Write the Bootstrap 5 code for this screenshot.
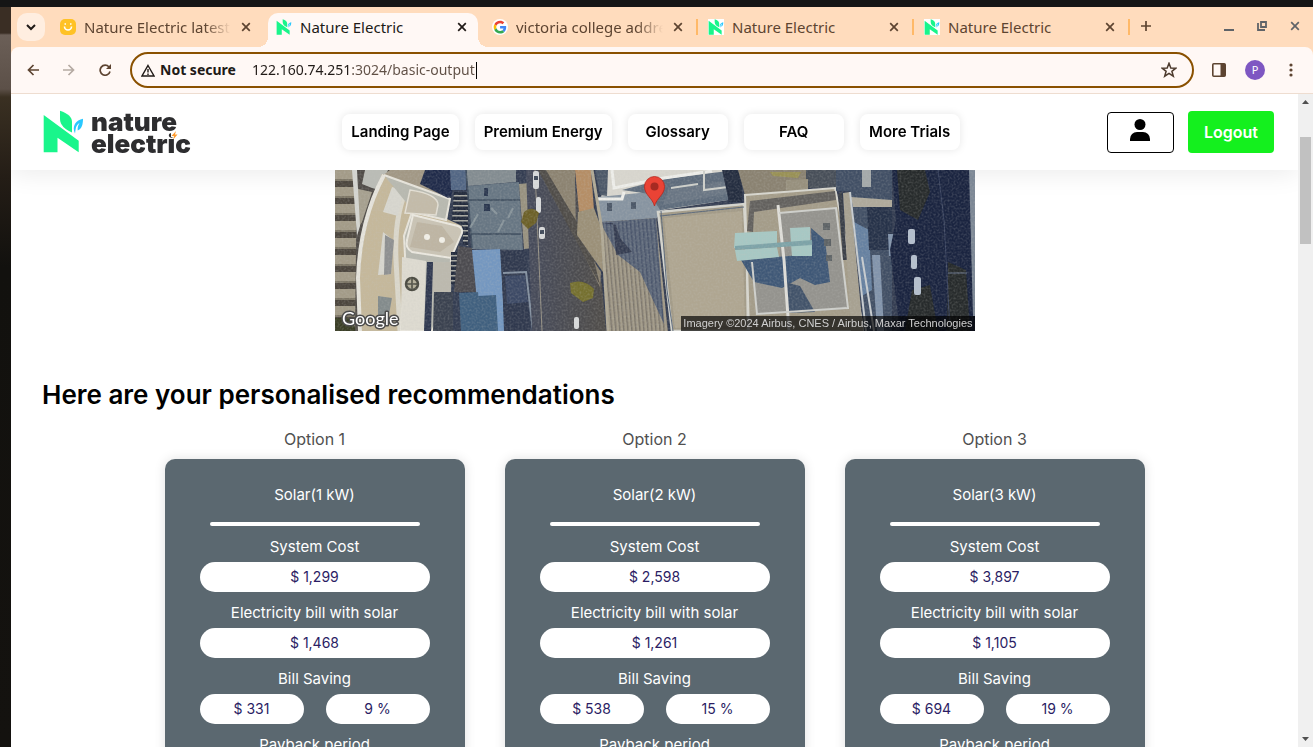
<!DOCTYPE html>
<html lang="en">
<head>
<meta charset="utf-8">
<meta name="viewport" content="width=device-width, initial-scale=1">
<title>Nature Electric</title>
<link href="https://cdn.jsdelivr.net/npm/bootstrap@5.3.0/dist/css/bootstrap.min.css" rel="stylesheet">
<style>
:root{--peach:#ffdcbd;--cream:#fff8f5;--brown:#5d4431;--ring:#8a5100;--slate:#5b6870;--ink:#2b1d64}
body{font-family:Inter,"Noto Sans",sans-serif;color:#000;background:#151515}
svg{display:block}
.os-panel{height:7px;background:#151515}
.wallpaper{width:11px;background:linear-gradient(#3a2e24 0,#3a2e24 26px,#6b5f57 28px,#5c5048 82px,#3a3022 90px,#241d16 170px,#12110e 260px,#14120f 100%)}
.ui-font{font-family:"Noto Sans",sans-serif;font-size:14px;line-height:20px}
.plain-btn{border:0;background:none;padding:0;color:inherit;display:flex;align-items:center;justify-content:center}
/* tab strip */
.tabstrip{height:40px;background:var(--peach);color:var(--brown);padding:6px 13px 0 6px}
.tab-search{width:28px;height:28px;border-radius:10px;background:#ffeee0;margin-right:7px;color:#201a17}
.tab-item{flex:0 1 216px;min-width:0;height:34px;padding:0 17px 6px 8px;position:relative;font-size:15px}
.tab-item .title{flex:1 1 0;min-width:0;margin:0 10px 0 8px;white-space:nowrap;overflow:hidden}
.tab-item .title.fade-end{-webkit-mask-image:linear-gradient(90deg,#000 82%,transparent);mask-image:linear-gradient(90deg,#000 82%,transparent)}
.tab-item.current{color:#201a17}
.tab-item.current::before{content:"";position:absolute;inset:0 6px 0 0;background:var(--cream);border-radius:10px 10px 0 0}
.tab-item.current>*{position:relative}
.tab-item .foot{position:absolute;bottom:0;width:10px;height:10px}
.foot-l{left:-10px;background:radial-gradient(circle at 0 0,transparent 10px,var(--cream) 10px)}
.foot-r{right:-4px;background:radial-gradient(circle at 100% 0,transparent 10px,var(--cream) 10px)}
.tab-item.ruled::after{content:"";position:absolute;right:2px;top:6px;width:2px;height:16px;background:#ffb968}
.window-btns{gap:23px;color:#5f6368}
/* toolbar */
.toolbar{height:47px;background:var(--cream);border-bottom:1px solid #eeddd0;border-radius:8px 8px 0 0;padding:0 12px;color:var(--brown)}
.omnibox{height:36px;border:2px solid var(--ring);border-radius:18px;padding:0 15px 0 9px;color:#201a17}
.url-input{width:224px;border:0;outline:0;padding:0;color:transparent;background:linear-gradient(90deg,#201a17 99px,#5f4f45 99px);-webkit-background-clip:text;background-clip:text}
.text-caret{width:1px;height:17px;background:#000}
.avatar{width:20px;height:20px;border-radius:50%;background:#7e57c2;color:#fff;font-size:11px}
/* page */
.site-head{height:76px;padding:0 24px 0 32px;box-shadow:0 4px 24px rgba(0,0,0,.08);z-index:2}
.menu-btn{min-width:100px;height:36px;padding:0 9px;border-radius:8px;background:#fff;color:#000;font-size:15px;font-weight:600;line-height:20px;box-shadow:0 0 8px rgba(0,0,0,.1);display:flex;align-items:center;justify-content:center;text-decoration:none;white-space:nowrap}
.profile-btn{width:67px;height:41px;border:1px solid #000;border-radius:4px;background:#fff;padding:0 0 4px}
.logout-btn{width:86px;height:42px;border:0;border-radius:4px;background:#14f01e;color:#fff;font-size:16px;font-weight:600}
.aerial{width:640px;max-width:100%}
.credit{right:0;bottom:0;padding:0 2px;background:rgba(0,0,0,.68);color:#cfcfcf;font:11px/15px "Liberation Sans",sans-serif;white-space:nowrap}
.headline{font-size:26px;line-height:32px;font-weight:600;margin:48px 31px 16px}
.options{gap:40px}
.option{width:300px}
.option-name{font-size:16px;line-height:24px;color:#505050;margin-bottom:8px}
.plan{background:var(--slate);border-radius:10px;padding:24px 35px;color:#fff;font-size:15px;line-height:20px;box-shadow:0 0 12px rgba(0,0,0,.12)}
.plan-name{font-size:15px;line-height:24px;font-weight:400;margin:0 0 15px}
.rule{height:4px;border-radius:2px;background:#fff;margin:0 10px}
.plan dt{font-weight:400;padding:11px 0 5px}
.plan dd{margin:0}
.pill{height:30px;line-height:30px;font-size:14px;border-radius:15px;background:#fff;color:var(--ink);flex:1 1 0}
.scroller{width:15px;background:#f0f0f0;padding:5px 2px}
.thumb{height:107px;background:#c1c1c1;margin-top:33px}
</style>
</head>
<body>
<svg width="0" height="0" class="position-absolute" aria-hidden="true">
 <symbol id="leafN" viewBox="0 0 41 43">
  <path fill="#19f58b" d="M.7 5 35.7 30.700V42.300L14.500 27.700V42.300H.7Z"/>
  <path fill="#19f58b" d="M17 .7C25 3.500 29 7 29 12V22.500C22 19.500 17 15 17 9Z"/>
  <path fill="#29c8ff" d="M40 8.700C33 10 28.500 16 32 23.500L32.500 20C33 16 34.500 14 36.500 13 34.800 15.500 34.500 18 34.700 20.500 39 19 40 14 40 8.700Z"/>
 </symbol>
 <symbol id="cross" viewBox="0 0 10 10"><path d="M1.200 1.200 8.800 8.800M8.800 1.200 1.200 8.800" stroke="currentColor" stroke-width="1.700" fill="none"/></symbol>
</svg>

<div class="vh-100 d-flex flex-column overflow-hidden">
 <div class="os-panel flex-shrink-0"></div>
 <div class="d-flex flex-grow-1" style="min-height:0">
  <div class="wallpaper flex-shrink-0"></div>
  <div class="flex-grow-1 d-flex flex-column bg-white" style="min-width:0">

   <div class="tabstrip ui-font d-flex flex-shrink-0">
    <button class="plain-btn tab-search flex-shrink-0" aria-label="Search tabs"><svg width="10" height="7" viewBox="0 0 10 7"><path d="M1 1 5 5 9 1" fill="none" stroke="currentColor" stroke-width="2"/></svg></button>
    <div class="tab-item d-flex align-items-center">
     <svg width="16" height="16"><rect width="16" height="16" rx="5" fill="#ffc225"/><path d="M4.500 7.500a3.500 3.500 0 0 0 7 0" fill="none" stroke="#fff" stroke-width="1.600"/><path d="M4.500 5h1.500M10 5h1.500" stroke="#fff" stroke-width="1.500"/></svg>
     <span class="title fade-end">Nature Electric latest</span>
     <button class="plain-btn" aria-label="Close tab"><svg width="10" height="10"><use href="#cross"/></svg></button>
    </div>
    <div class="tab-item current d-flex align-items-center">
     <svg width="16" height="16"><use href="#leafN"/></svg>
     <span class="title">Nature Electric</span>
     <button class="plain-btn" aria-label="Close tab"><svg width="10" height="10"><use href="#cross"/></svg></button>
     <i class="foot foot-l position-absolute"></i><i class="foot foot-r position-absolute"></i>
    </div>
    <div class="tab-item ruled d-flex align-items-center">
     <svg width="16" height="16" viewBox="0 0 48 48"><circle cx="24" cy="24" r="24" fill="#fff"/><g transform="translate(5 5) scale(.8)"><path fill="#EA4335" d="M24 9.500c3.540 0 6.710 1.220 9.210 3.600l6.850-6.850C35.900 2.380 30.470 0 24 0 14.620 0 6.510 5.380 2.560 13.220l7.980 6.190C12.430 13.720 17.740 9.500 24 9.500z"/><path fill="#4285F4" d="M46.980 24.550c0-1.570-.15-3.090-.38-4.550H24v9.020h12.940c-.58 2.960-2.260 5.480-4.780 7.180l7.730 6c4.510-4.180 7.090-10.360 7.090-17.650z"/><path fill="#FBBC05" d="M10.530 28.590c-.48-1.450-.76-2.990-.76-4.590s.27-3.140.76-4.590l-7.980-6.190C.92 16.460 0 20.120 0 24c0 3.880.92 7.540 2.560 10.780l7.970-6.190z"/><path fill="#34A853" d="M24 48c6.480 0 11.930-2.130 15.890-5.810l-7.730-6c-2.150 1.450-4.920 2.300-8.160 2.300-6.260 0-11.570-4.220-13.470-9.910l-7.980 6.190C6.510 42.620 14.620 48 24 48z"/></g></svg>
     <span class="title fade-end">victoria college addre</span>
     <button class="plain-btn" aria-label="Close tab"><svg width="10" height="10"><use href="#cross"/></svg></button>
    </div>
    <div class="tab-item ruled d-flex align-items-center">
     <svg width="16" height="16" class="bg-white"><use href="#leafN"/></svg>
     <span class="title">Nature Electric</span>
     <button class="plain-btn" aria-label="Close tab"><svg width="10" height="10"><use href="#cross"/></svg></button>
    </div>
    <div class="tab-item ruled d-flex align-items-center">
     <svg width="16" height="16" class="bg-white"><use href="#leafN"/></svg>
     <span class="title">Nature Electric</span>
     <button class="plain-btn" aria-label="Close tab"><svg width="10" height="10"><use href="#cross"/></svg></button>
    </div>
    <button class="plain-btn ms-2 pb-1 mb-1" aria-label="New tab"><svg width="12" height="12"><path d="M6 1V11M1 6H11" stroke="currentColor" stroke-width="1.700"/></svg></button>
    <div class="window-btns d-flex ms-auto align-items-center pb-2">
     <button class="plain-btn" aria-label="Minimize"><svg width="10" height="10"><path d="M0 9H10" stroke="currentColor" stroke-width="2"/></svg></button>
     <button class="plain-btn" aria-label="Restore"><svg width="10" height="10"><path d="M4 1H9V6H4ZM1 2V9H8" fill="none" stroke="currentColor" stroke-width="1.800"/></svg></button>
     <button class="plain-btn" aria-label="Close window"><svg width="10" height="10"><use href="#cross"/></svg></button>
    </div>
   </div>

   <div style="background:var(--peach)" class="flex-shrink-0">
   <div class="toolbar ui-font d-flex align-items-center">
    <button class="plain-btn me-4 ms-1" aria-label="Back"><svg width="12" height="12"><path d="M12 6H1.500M6.500 1 1.500 6l5 5" fill="none" stroke="currentColor" stroke-width="1.700"/></svg></button>
    <button class="plain-btn me-4" aria-label="Forward" style="color:#b5aaa2"><svg width="12" height="12"><path d="M0 6H10.500M5.500 1 10.500 6l-5 5" fill="none" stroke="currentColor" stroke-width="1.700"/></svg></button>
    <button class="plain-btn" aria-label="Reload" style="margin-right:19px"><svg width="12" height="12"><path d="M10 3A5 5 0 1 0 11 7.500" fill="none" stroke="currentColor" stroke-width="1.700"/><path d="M12 0V5H7Z" fill="currentColor"/></svg></button>
    <div class="omnibox d-flex align-items-center flex-grow-1">
     <svg width="14" height="13"><path d="M7 1.500 13 12H1Z" fill="none" stroke="currentColor" stroke-width="1.400"/><path d="M7 5V8.500M7 9.500V11" stroke="currentColor" stroke-width="1.400"/></svg>
     <label for="url" class="fw-bold text-nowrap" style="margin:0 16px 0 5px">Not secure</label>
     <input id="url" class="url-input ui-font" value="122.160.74.251:3024/basic-output">
     <span class="text-caret"></span>
     <button class="plain-btn ms-auto" aria-label="Bookmark"><svg width="16" height="16"><path d="M8 1.300 9.800 6 14.800 6.200 10.900 9.300 12.300 14.200 8 11.400 3.700 14.200 5.100 9.300 1.200 6.200 6.200 6Z" fill="none" stroke="#4d3b2e" stroke-width="1.500"/></svg></button>
    </div>
    <button class="plain-btn" aria-label="Side panel" style="margin:0 19px 0 18px"><svg width="14" height="14"><rect x=".8" y=".8" width="12.400" height="12.400" rx="1" fill="none" stroke="currentColor" stroke-width="1.600"/><path d="M8.500 1H13V13H8.500Z" fill="currentColor"/></svg></button>
    <button class="plain-btn avatar" aria-label="Profile">P</button>
    <button class="plain-btn" aria-label="Menu" style="margin:0 8px 0 24px"><svg width="4" height="14" fill="currentColor"><circle cx="2" cy="2" r="1.600"/><circle cx="2" cy="7" r="1.600"/><circle cx="2" cy="12" r="1.600"/></svg></button>
   </div>
   </div>

   <div class="d-flex flex-grow-1" style="min-height:0">
    <div class="flex-grow-1 overflow-hidden" style="min-width:0">
     <header class="site-head sticky-top bg-white d-flex align-items-center justify-content-between">
      <a href="#" aria-label="nature electric">
       <svg width="152" height="44" viewBox="43 110 152 44" class="overflow-visible">
        <use href="#leafN" x="43" y="110" width="41" height="43"/>
        <g font-family="Inter,sans-serif" font-weight="900" font-size="26" fill="#2d2d2f"><text x="91" y="131">nature</text><text x="91" y="153">electric</text></g>
        <path d="M171 131h9v6h-9Z" fill="#fff"/><path d="M176 131 171.500 136H174L173.200 139.500 177.500 134.500H175Z" fill="#ff9a2b"/>
       </svg>
      </a>
      <nav class="d-flex gap-3">
       <a class="menu-btn" href="#">Landing Page</a><a class="menu-btn" href="#">Premium Energy</a><a class="menu-btn" href="#">Glossary</a><a class="menu-btn" href="#">FAQ</a><a class="menu-btn" href="#">More Trials</a>
      </nav>
      <div class="d-flex align-items-center" style="gap:14px">
       <button class="plain-btn profile-btn" aria-label="Account"><svg width="20" height="22"><circle cx="10" cy="5.500" r="5.500"/><path d="M0 22v-2a7 7 0 0 1 7-7h6a7 7 0 0 1 7 7v2Z"/></svg></button>
       <button class="logout-btn">Logout</button>
      </div>
     </header>

     <div class="aerial position-relative mx-auto" style="z-index:3">
      <svg class="w-100" viewBox="335 170 640 161" role="img" aria-label="Satellite view of the property">
       <defs>
        <pattern id="sheds" width="40" height="17" patternUnits="userSpaceOnUse"><rect width="40" height="17" fill="#4c463e"/><rect width="40" height="9" fill="#a39b88"/><rect y="9" width="40" height="2" fill="#7d7666"/></pattern>
        <pattern id="ribs" width="4" height="8" patternUnits="userSpaceOnUse" patternTransform="rotate(-5)"><rect width="4" height="8" fill="#a39b89"/><rect width="1.500" height="8" fill="#7b756b"/></pattern>
        <pattern id="ribsDark" width="4" height="8" patternUnits="userSpaceOnUse" patternTransform="rotate(-5)"><rect width="4" height="8" fill="#606b7c"/><rect width="1.500" height="8" fill="#48536a"/></pattern>
        <pattern id="rungs" width="12" height="5" patternUnits="userSpaceOnUse"><rect width="12" height="5" fill="#222a3c"/><rect width="12" height="1.500" fill="#a9a9a2"/></pattern>
        <linearGradient id="road" x1="0" x2="1"><stop stop-color="#464b5c"/><stop offset="1" stop-color="#504d49"/></linearGradient>
        <filter id="grain" x="0" y="0" width="100%" height="100%"><feTurbulence type="fractalNoise" baseFrequency=".5" numOctaves="2" seed="8"/><feColorMatrix values="0 0 0 0 .55  0 0 0 0 .55  0 0 0 0 .52  1.600 0 0 0 -.62"/></filter>
       </defs>
       <path fill="#343d52" d="M335 170H975V331H335Z"/>
       <path fill="url(#sheds)" d="M335 170H357V331H335Z"/>
       <path fill="#3a3e26" d="M335 318h16l6 13h-22Z"/>
       <path fill="#504c48" d="M357 170H390L362 300 365 331H355Z"/>
       <path fill="#babcb6" d="M365 170H388L380 190 372 188 362 184Z"/>
       <path fill="#a6a08f" d="M354 188 372 192 362 222 357 230Z"/>
       <path fill="#d5d6d1" d="M352 170h5l3 56-3 10-3-40Z"/>
       <path fill="#a29885" d="M390 170H425L448 197 382 176Z"/>
       <path fill="#c5b89b" d="M382 174 450 199 447 219 462 226 452 258 450 290 434 300 432 331H362Q350 260 382 174Z"/>
       <path fill="none" stroke="#e6e4dc" stroke-width="4" d="M384 175Q360 220 358 278L360 331"/>
       <path fill="none" stroke="#dbd8cc" stroke-width="5" d="M408 186Q394 215 396 260L400 331"/>
       <path fill="#d8d7cf" d="M392 187 404 190 398 216 383 212ZM383 232 393 240 391 274 378 275Z"/>
       <path fill="#8e9091" d="M385 235 394 240 391 274 384 275Z"/>
       <path fill="#b8b9b0" stroke="#e8e5dc" stroke-width="2" d="M384 175 450 199 446 220 412 212 404 236 405 256 401 331H432L450 292 451 258"/>
       <path fill="#c3bba9" stroke="#e4e0d5" stroke-width="1.500" d="M410 190Q438 194 438 205L436 215 405 213Z"/>
       <path fill="#cac4b5" stroke="#ece9e0" stroke-width="2" d="M413 215 458 226Q463 228 462 233L451 258 412 252Q405 248 407 240Z"/>
       <path fill="#b5ac98" d="M417 222 442 226 454 242 440 252 410 247Z" opacity=".6"/>
       <g fill="#f2f0e8"><circle cx="427" cy="237" r="3"/><circle cx="442" cy="240" r="3"/></g>
       <path fill="#dedbd1" d="M402 257 426 261 424 330H401Z"/>
       <path fill="#bcb9ae" d="M432 262H451V292H432Z"/>
       <circle cx="412" cy="284" r="6" fill="#b5b09b" stroke="#4b4b42" stroke-width="2.500"/><path d="M407 284h10M412 279v10" stroke="#4b4b42" stroke-width="1.500"/>
       <path fill="#2f3850" d="M427 262H433L431 331H424Z"/><path fill="#3b4250" d="M434 292H453V331H433Z"/>
       <path fill="#4d667f" d="M378 296 392 298 388 320 378 316Z" opacity=".55"/>
       <path fill="#202b4a" d="M425 170H452V195L448 198 420 184Z"/>
       <path fill="#526684" d="M450 170H466V190H451Z"/>
       <path fill="url(#rungs)" d="M454 192H468V246L463 244V226L452 220Z"/><path fill="url(#rungs)" d="M451 252H457V284H451Z"/>
       <path fill="#4c4b50" d="M458 246 472 248 476 292H454Z"/>
       <path fill="#838c91" d="M466 170H516V182L468 186Z"/>
       <path fill="#677683" d="M468 186 519 182 523 250 472 249Z"/>
       <path fill="none" stroke="#3f4e5f" stroke-width="1.500" d="M468 200H520M470 234H521M466 170 472 248"/>
       <path fill="none" stroke="#96a1a5" stroke-width="2" opacity=".7" d="M478 214 470 228M491 208 497 214M504 220 498 232M513 208 508 218"/>
       <path fill="#2a374f" d="M484 188h4v8h-4ZM484 204h6v7h-6Z"/>
       <path fill="#989280" d="M519 184 529 183 534 248 524 249Z"/>
       <path fill="#7497c0" d="M472 250 500 249 505 331H480Z"/>
       <path fill="#40607f" d="M459 293 478 292 482 331H461ZM478 296 496 295 498 331H482Z"/>
       <path fill="#30394e" d="M501 251 525 250 530 331H504Z"/><path fill="none" stroke="#8390a0" stroke-width="2" d="M503 273 526 272 533 331"/>
       <path fill="#3c4965" d="M505 276 525 275 528 302 507 304Z"/>
       <path fill="url(#road)" d="M526 170H570L602 285 606 331H532Z"/>
       <path fill="#8c8371" d="M542 170H575L576 235 601 272 600 287Z"/><path fill="#504d49" d="M538 170H546L590 244 600 285Z"/>
       <path fill="#b58e66" d="M575 170H591L594 210 579 212Z"/><path fill="#9b9078" d="M578 212 594 208 602 230 603 272 577 235Z"/>
       <path stroke="#969185" d="M535 170 542 331" fill="none"/>
       <g fill="#d8dadb"><rect x="533" y="171" width="6" height="18" rx="2"/><rect x="536" y="197" width="5" height="16" rx="2"/><rect x="539" y="227" width="6" height="12" rx="2"/><rect x="574" y="317" width="5" height="12" rx="2"/></g>
       <path fill="#404a5a" d="M534 176h4v4h-4ZM540 230h4v4h-4Z"/>
       <path fill="#6c6028" d="M524 212q8-7 15 1l-3 10-8 6-7-7Z"/><path fill="#75702f" d="M570 283q14-5 24 6l-1 9-10 4-12-9Z"/>
       <path fill="#d9d7cf" d="M607 170H725L728 200 650 212 600 202Z"/>
       <path fill="#8794a1" d="M598 197 650 192 665 208 655 220 600 222Z"/><path fill="#4c5868" d="M607 203h5v8h-5ZM631 202h5v7h-5ZM608 170 595 170 600 195 607 196Z"/>
       <path fill="#5e6c7c" d="M622 190 664 179 728 171V200L660 210 650 194Z"/>
       <path fill="none" stroke="#eeeeea" stroke-width="3" d="M598 199H622L624 192M612 170 614 188 664 178 712 171"/>
       <path fill="#6a7684" d="M668 190 728 181V194L663 205Z"/><path fill="none" stroke="#ced0cb" stroke-width="2" d="M671 188 698 184M704 171V190L728 187"/>
       <path fill="url(#ribs)" d="M602 222 656 218 668 331H609Z"/>
       <path fill="url(#ribsDark)" d="M602 222 656 218 664 324 640 272 618 255 602 226Z"/><path fill="#2c3348" d="M602 223H613L616 255 632 252 620 238 616 225Z" opacity=".75"/>
       <path fill="none" stroke="#b0a995" stroke-width="3" d="M592 170 602 230 608 331"/>
       <path fill="#a39b88" stroke="#d5d5ce" stroke-width="2.500" d="M658 212 744 204 747 260 748 331H672Z"/>
       <path fill="#afa691" d="M664 218 742 211 745 325 675 328Z"/>
       <path fill="none" stroke="#596779" stroke-width="1" d="M661 211 667 290 673 331M660 216 744 207"/>
       <path fill="#242d40" d="M722 170H742V202L729 202Z"/><path fill="#8a8271" d="M738 170H806V192L745 195Z"/><path fill="#a49b42" d="M770 172H801L798 178 773 176Z" opacity=".6"/>
       <path fill="#484f59" d="M806 170H836V188H806Z"/><path fill="#97907d" d="M786 180 808 179V190H786Z"/>
       <path fill="#a49c89" stroke="#d8d7cf" stroke-width="2" d="M745 195 835 188 864 331H749Z"/>
       <path fill="#63615e" d="M750 201 835 191 836 200 754 212 753 232 747 231Z"/>
       <path fill="#94938e" d="M779 213 837 208 848 309 757 314 752 262 780 256Z"/>
       <path fill="#3f5877" d="M741 260 812 254 811 228 825 240 830 282 815 285 800 278 782 288 754 282Z"/><path fill="#42536a" d="M785 282 800 286 815 312 787 313Z"/>
       <path fill="none" stroke="#e0dfda" stroke-width="3" d="M778 205 784 260 789 331"/><path fill="none" stroke="#cfd0cc" stroke-width="2" d="M779 213 836 208 848 308 757 314 752 262"/>
       <path fill="#3a3f48" d="M838 194 842 192 847 260 843 260Z"/><path fill="#a7a191" d="M843 193 850 192 863 331H851Z"/>
       <path fill="#a7c8c4" d="M735 233 777 231V246L734 248ZM790 228 810 227V242L791 243ZM735 250 777 247 779 257 737 261ZM791 245 812 243V256L792 256Z"/>
       <path fill="#7da3a8" d="M735 246 812 240V245L735 250Z"/>
       <g fill="#5e6366"><rect x="823" y="223" width="7" height="7"/><rect x="824" y="239" width="7" height="7"/><rect x="826" y="255" width="6" height="6"/></g>
       <path fill="#414f65" d="M836 170H892V331H864L850 191H836Z"/><path fill="#a4a9aa" d="M862 170H871V187H862Z"/><path fill="#aea99b" d="M851 197 892 200V207H853Z"/>
       <path fill="#6681a1" d="M854 222 869 230 872 290 862 296Z"/><path fill="#263249" d="M867 207H892V250H869Z"/><path fill="#8294ac" d="M872 255H880L884 331H877ZM888 234H896L897 256H889Z"/>
       <path fill="none" stroke="#c7ccd0" stroke-width="2" d="M850 192 866 331M862 257 874 331"/>
       <path fill="#1a2440" d="M892 170H975V331H900L890 250 896 220Z"/>
       <path fill="#272b2c" d="M897 170H925L930 192 918 220 900 210ZM912 290 930 285 938 331H905ZM948 262 966 270 970 331H947Z"/>
       <path fill="none" stroke="#3a4460" d="M938 170 944 220 950 331"/><path stroke="#69758b" d="M948 273H967"/>
       <g fill="#b4bfcd"><rect x="908" y="229" width="7" height="15" rx="2"/><rect x="911" y="255" width="6" height="14" rx="2"/><rect x="914" y="277" width="7" height="18" rx="2"/></g>
       <path fill="#7c8795" d="M969 170H975V316H973Z"/>
       <path d="M335 170H975V331H335Z" filter="url(#grain)" opacity=".3"/>
       <path d="M654.500 206C652.500 198 644.500 195 644.500 186.500a10 10 0 0 1 20 0C664.500 195 656.500 198 654.500 206Z" fill="#ea4335" stroke="#b6261c" stroke-width=".8"/><circle cx="654.500" cy="186.500" r="4" fill="#a52a22"/>
       <text x="342" y="325" font-family="Lato,sans-serif" font-size="18" font-weight="400" fill="#fff" stroke="#4c4c4c" stroke-width="3" stroke-linejoin="round" paint-order="stroke">Google</text>
      </svg>
      <div class="credit position-absolute">Imagery ©2024 Airbus, CNES / Airbus, Maxar Technologies</div>
     </div>

     <h1 class="headline">Here are your personalised recommendations</h1>

     <div class="options d-flex flex-wrap justify-content-center text-center">
      <section class="option">
       <div class="option-name">Option 1</div>
       <div class="plan">
        <h2 class="plan-name">Solar(1 kW)</h2><div class="rule"></div>
        <dl class="m-0">
         <dt>System Cost</dt><dd class="pill">$ 1,299</dd>
         <dt>Electricity bill with solar</dt><dd class="pill">$ 1,468</dd>
         <dt>Bill Saving</dt><dd class="d-flex" style="gap:22px"><span class="pill">$ 331</span><span class="pill">9 %</span></dd>
         <dt>Payback period</dt><dd class="pill"></dd>
        </dl>
       </div>
      </section>
      <section class="option">
       <div class="option-name">Option 2</div>
       <div class="plan">
        <h2 class="plan-name">Solar(2 kW)</h2><div class="rule"></div>
        <dl class="m-0">
         <dt>System Cost</dt><dd class="pill">$ 2,598</dd>
         <dt>Electricity bill with solar</dt><dd class="pill">$ 1,261</dd>
         <dt>Bill Saving</dt><dd class="d-flex" style="gap:22px"><span class="pill">$ 538</span><span class="pill">15 %</span></dd>
         <dt>Payback period</dt><dd class="pill"></dd>
        </dl>
       </div>
      </section>
      <section class="option">
       <div class="option-name">Option 3</div>
       <div class="plan">
        <h2 class="plan-name">Solar(3 kW)</h2><div class="rule"></div>
        <dl class="m-0">
         <dt>System Cost</dt><dd class="pill">$ 3,897</dd>
         <dt>Electricity bill with solar</dt><dd class="pill">$ 1,105</dd>
         <dt>Bill Saving</dt><dd class="d-flex" style="gap:22px"><span class="pill">$ 694</span><span class="pill">19 %</span></dd>
         <dt>Payback period</dt><dd class="pill"></dd>
        </dl>
       </div>
      </section>
     </div>
    </div>

    <div class="scroller flex-shrink-0 d-flex flex-column">
     <svg width="11" height="5"><path d="M2 5 5.500 1 9 5Z" fill="#505050"/></svg>
     <div class="thumb"></div>
     <svg width="11" height="5" class="mt-auto"><path d="M2 0 5.500 4 9 0Z" fill="#505050"/></svg>
    </div>
   </div>
  </div>
 </div>
</div>
<script src="https://cdn.jsdelivr.net/npm/bootstrap@5.3.0/dist/js/bootstrap.bundle.min.js"></script>
</body>
</html>
